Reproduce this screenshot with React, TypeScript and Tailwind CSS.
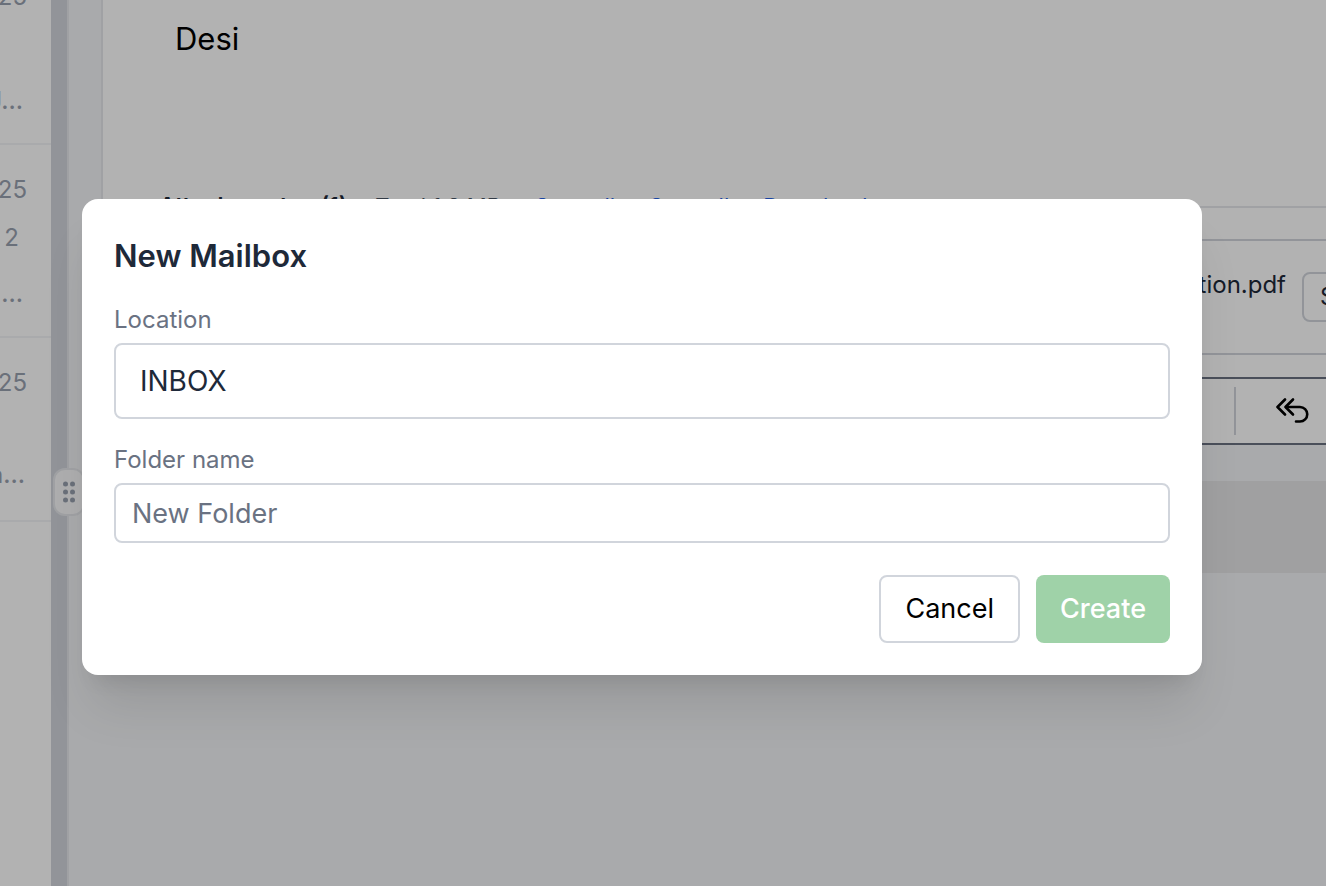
import React, { useState } from 'react';

interface MailRow {
  date: string;
  subject: string;
  preview: string;
  height: string;
}

const rows: MailRow[] = [
  { date: '25', subject: '', preview: 'J...', height: 'h-[145px]' },
  { date: '25', subject: '2', preview: '...', height: 'h-[193px]' },
  { date: '25', subject: '', preview: 'a...', height: 'h-[184px]' },
];

const MailList: React.FC = () => (
  <aside className="flex w-[51px] shrink-0 flex-col bg-white text-[24px] leading-8 text-gray-400">
    {rows.map((row, i) => (
      <div
        key={i}
        className={`flex flex-col items-end overflow-hidden border-b-2 border-gray-100 pr-6 ${i === 0 ? 'justify-end pb-[26px]' : 'pt-[29px]'} ${row.height}`}
      >
        <span className={i === 0 ? 'mb-[72px]' : ''}>{row.date}</span>
        {i > 0 && <span className="mt-4 h-8 pr-2">{row.subject}</span>}
        <span className={`font-medium ${i === 1 ? 'mt-6 pr-1' : i === 2 ? 'mt-3 pr-0.5' : 'pr-1'}`}>{row.preview}</span>
      </div>
    ))}
  </aside>
);

const ReplyAllIcon: React.FC = () => (
  <svg width="34" height="28" viewBox="0 0 34 28" fill="none" stroke="currentColor" strokeWidth="2.6" strokeLinecap="round" strokeLinejoin="round">
    <path d="M9 2.500 1.500 10l7.500 7.500" />
    <path d="M17 2.500 9.500 10l7.500 7.500" />
    <path d="M10 10h14a7.250 7.250 0 0 1 0 14.500H20" />
  </svg>
);

const MessagePane: React.FC = () => (
  <main className="flex min-w-0 flex-1 flex-col border-l-2 border-gray-200 bg-gray-100">
    <div className="ml-8 border-l-2 border-gray-200 bg-white">
      <div className="h-[198px] px-[72px] pt-4 text-[31px] leading-[46px] text-black">Desi</div>
      <div className="-mb-2 flex h-4 items-center gap-[34px] whitespace-nowrap pl-14 text-[22px] text-[#2563eb]">
        <div className="flex items-center gap-7 text-gray-600">
          <b className="flex gap-5 text-[23px] font-semibold text-gray-800">
            <span>Attachments</span>
            <span>(1)</span>
          </b>
          <span>Total 1.8 MB</span>
        </div>
        <a href="#save">Save all</a>
        <a href="#copy">Save all</a>
        <a href="#download">Download</a>
      </div>
      <div className="border-t-2 border-gray-200 pt-[31px]">
        <div className="flex h-[116px] items-start justify-end border-y-2 border-gray-300 pt-[30px] text-[24px] text-gray-800">
          <span className="mr-4 leading-[28px]">presentation.pdf</span>
          <button className="-mr-16 mt-px h-[50px] w-[88px] rounded-lg border-2 border-gray-300 pl-4 text-left">Save</button>
        </div>
      </div>
      <div className="mt-[22px] flex h-[68px] items-center justify-end border-y-2 border-gray-500 pr-4">
        <div className="mr-10 h-12 w-[2px] bg-gray-300" />
        <button aria-label="Reply all" className="text-black">
          <ReplyAllIcon />
        </button>
      </div>
    </div>
    <div className="mt-9 ml-8 h-[92px] bg-[#e5e5e7]" />
  </main>
);

const NewMailboxDialog: React.FC = () => {
  const [name, setName] = useState('');

  return (
    <form
      role="dialog"
      aria-labelledby="dialog-title"
      onSubmit={(e) => e.preventDefault()}
      className="w-full max-w-[1120px] rounded-2xl bg-white p-8 shadow-[0_40px_50px_-10px_rgba(0,0,0,0.1),0_16px_20px_-12px_rgba(0,0,0,0.1)]"
    >
      <h2 id="dialog-title" className="text-[31px] leading-[50px] font-semibold text-gray-800">New Mailbox</h2>
      <label htmlFor="location" className="mt-[23px] block text-[24px] leading-8 text-gray-500">Location</label>
      <input
        id="location"
        readOnly
        value="INBOX"
        className="mt-[7px] block h-[76px] w-full rounded-lg border-2 border-gray-300 px-6 text-[28px] text-gray-800"
      />
      <label htmlFor="folder" className="mt-[25px] block text-[24px] leading-8 text-gray-500">Folder name</label>
      <input
        id="folder"
        value={name}
        onChange={(e) => setName(e.target.value)}
        placeholder="New Folder"
        className="mt-[7px] block h-[60px] w-full rounded-lg border-2 border-gray-300 px-4 text-[27px] placeholder:text-gray-500"
      />
      <div className="mt-8 flex justify-end gap-4 text-[27px]">
        <button type="button" className="h-[68px] rounded-lg border-2 border-gray-300 px-6 text-black">Cancel</button>
        <button type="submit" className="h-[68px] rounded-lg bg-[#9fd2a8] px-6 font-medium text-white">Create</button>
      </div>
    </form>
  );
};

export default function App() {
  return (
    <div className="relative flex h-screen overflow-hidden bg-gray-100 font-['Inter',sans-serif]">
      <MailList />
      <div className="relative w-4 shrink-0 bg-gray-300">
        <div className="absolute top-[468px] left-[2px] z-10 flex h-12 w-8 items-center justify-center rounded-xl border-2 border-gray-200 bg-gray-50 text-gray-400">
          <svg width="14" height="24" viewBox="0 0 14 24" fill="currentColor">
            {[4, 12, 20].map((y) => (
              <g key={y}>
                <circle cx="3.500" cy={y} r="2.500" />
                <circle cx="10.500" cy={y} r="2.500" />
              </g>
            ))}
          </svg>
        </div>
      </div>
      <MessagePane />
      <div className="absolute inset-0 z-20 flex items-start justify-center bg-black/30 pt-[199px] pr-[42px]">
        <NewMailboxDialog />
      </div>
    </div>
  );
}
